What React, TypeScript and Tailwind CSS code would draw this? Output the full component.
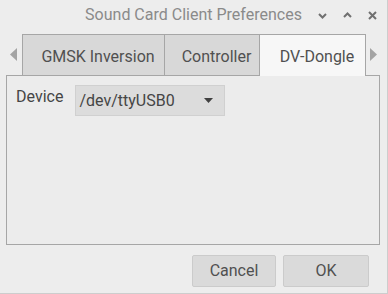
import { useState } from 'react'

const TABS = ['GMSK Inversion', 'Controller', 'DV-Dongle']

const TAB_WIDTHS: Record<string, string> = {
  'GMSK Inversion': 'w-[143px] border-l',
  Controller: 'w-[95px]',
  'DV-Dongle': 'w-[106px]',
}

export default function App() {
  const [tab, setTab] = useState('DV-Dongle')

  return (
    <div
      className="w-[388px] h-[294px] bg-[#ededed] border-r border-b border-[#cdcdcd] flex flex-col text-[#505050]"
      style={{ fontFamily: 'Roboto, "Liberation Sans", sans-serif' }}
    >
      {/* title bar */}
      <div className="h-[30px] grid grid-cols-[1fr_auto_1fr] items-center">
        <div />
        <div className="text-[16px] text-[#8a8a8a] leading-none">Sound Card Client Preferences</div>
        <div className="flex justify-end items-center gap-[16px] pr-[10px]">
          <svg width="9" height="6" viewBox="0 0 9 6" className="mt-[1px]">
            <path d="M1 1 L4.5 4.5 L8 1" fill="none" stroke="#707070" strokeWidth="2" />
          </svg>
          <svg width="9" height="6" viewBox="0 0 9 6">
            <path d="M1 5 L4.5 1.5 L8 5" fill="none" stroke="#707070" strokeWidth="2" />
          </svg>
          <svg width="9" height="9" viewBox="0 0 9 9">
            <path d="M1 1 L8 8 M8 1 L1 8" fill="none" stroke="#707070" strokeWidth="2" />
          </svg>
        </div>
      </div>

      {/* tab strip */}
      <div className="mt-[4px] mx-[6px] flex items-end">
        <div className="w-[16px] h-[41px] flex items-center pl-[4px]">
          <svg width="7" height="13" viewBox="0 0 7 13">
            <path d="M7 0 L0 6.5 L7 13 Z" fill="#a3a3a3" />
          </svg>
        </div>
        {TABS.map((t) => {
          const active = t === tab
          return (
            <button
              key={t}
              onClick={() => setTab(t)}
              className={`${TAB_WIDTHS[t]} border-t border-r border-[#a6a6a6] text-[16px] leading-none pt-[3px] pl-[9px] ${
                active ? 'h-[42px] -mb-px bg-[#f7f7f7] relative z-10' : 'h-[41px] bg-[#d8d8d8]'
              }`}
            >
              {t}
            </button>
          )
        })}
        <div className="w-[15px] h-[41px] flex items-center pl-[4px]">
          <svg width="7" height="13" viewBox="0 0 7 13">
            <path d="M0 0 L7 6.5 L0 13 Z" fill="#a3a3a3" />
          </svg>
        </div>
      </div>

      {/* page */}
      <div className="mx-[6px] mr-[7px] h-[170px] border border-[#a6a6a6] bg-[#ececec] pt-[9px] pl-[9px]">
        <div className="flex items-center gap-[12px]">
          <span className="text-[16px] text-[#454545] -mt-[7px]">Device</span>
          <div className="w-[150px] h-[31px] bg-[#dcdcdc] border border-[#d0d0d0] flex items-center justify-between pl-[3px] pr-[11px]">
            <span className="text-[16px] text-[#454545]">/dev/ttyUSB0</span>
            <svg width="9" height="5" viewBox="0 0 9 5">
              <path d="M0 0 L9 0 L4.5 5 Z" fill="#404040" />
            </svg>
          </div>
        </div>
      </div>

      {/* buttons */}
      <div className="mt-[10px] flex justify-end gap-[7px] pr-[18px]">
        <button className="w-[84px] h-[32px] bg-[#dadada] border border-[#cbcbcb] rounded-[2px] text-[16px] text-[#505050]">
          Cancel
        </button>
        <button className="w-[86px] h-[32px] bg-[#dadada] border border-[#cbcbcb] rounded-[2px] text-[16px] text-[#505050]">
          OK
        </button>
      </div>
    </div>
  )
}
